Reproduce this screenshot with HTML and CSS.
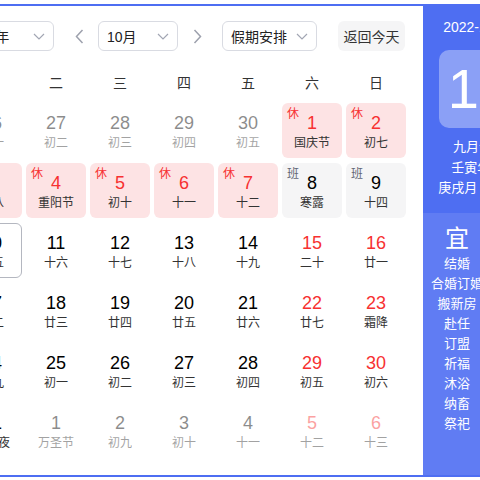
FILE: index.html
```html
<!DOCTYPE html>
<html lang="zh-CN">
<head>
<meta charset="utf-8">
<title>万年历</title>
<link rel="stylesheet" href="styles.css">
</head>
<body>
<div class="viewport">
  <div class="calendar">
    <div class="main">
      <div class="toolbar">
        <div class="select year"><span>2022年</span><svg width="12" height="7" viewBox="0 0 12 7"><path d="M1 1l5 5 5-5" fill="none" stroke="#a2a6b3" stroke-width="1.2"/></svg></div>
        <div class="nav prev"><svg width="9" height="15" viewBox="0 0 9 15"><path d="M7.5 1L1.5 7.5 7.5 14" fill="none" stroke="#9da1ad" stroke-width="1.5"/></svg></div>
        <div class="select month"><span>10月</span><svg width="12" height="7" viewBox="0 0 12 7"><path d="M1 1l5 5 5-5" fill="none" stroke="#a2a6b3" stroke-width="1.2"/></svg></div>
        <div class="nav next"><svg width="9" height="15" viewBox="0 0 9 15"><path d="M1.5 1L7.5 7.5 1.5 14" fill="none" stroke="#9da1ad" stroke-width="1.5"/></svg></div>
        <div class="select holiday"><span>假期安排</span><svg width="12" height="7" viewBox="0 0 12 7"><path d="M1 1l5 5 5-5" fill="none" stroke="#a2a6b3" stroke-width="1.2"/></svg></div>
        <div class="today-btn">返回今天</div>
      </div>
      <div class="weekdays">
        <span>一</span><span>二</span><span>三</span><span>四</span><span>五</span><span>六</span><span>日</span>
      </div>
      <div class="grid">
        <div class="cell other"><span class="num">26</span><span class="lunar">初一</span></div>
        <div class="cell other"><span class="num">27</span><span class="lunar">初二</span></div>
        <div class="cell other"><span class="num">28</span><span class="lunar">初三</span></div>
        <div class="cell other"><span class="num">29</span><span class="lunar">初四</span></div>
        <div class="cell other"><span class="num">30</span><span class="lunar">初五</span></div>
        <div class="cell rest"><span class="tag">休</span><span class="num">1</span><span class="lunar">国庆节</span></div>
        <div class="cell rest"><span class="tag">休</span><span class="num">2</span><span class="lunar">初七</span></div>

        <div class="cell rest"><span class="tag">休</span><span class="num">3</span><span class="lunar">初八</span></div>
        <div class="cell rest"><span class="tag">休</span><span class="num">4</span><span class="lunar">重阳节</span></div>
        <div class="cell rest"><span class="tag">休</span><span class="num">5</span><span class="lunar">初十</span></div>
        <div class="cell rest"><span class="tag">休</span><span class="num">6</span><span class="lunar">十一</span></div>
        <div class="cell rest"><span class="tag">休</span><span class="num">7</span><span class="lunar">十二</span></div>
        <div class="cell work"><span class="tag">班</span><span class="num">8</span><span class="lunar">寒露</span></div>
        <div class="cell work"><span class="tag">班</span><span class="num">9</span><span class="lunar">十四</span></div>

        <div class="cell today"><span class="num">10</span><span class="lunar">十五</span></div>
        <div class="cell"><span class="num">11</span><span class="lunar">十六</span></div>
        <div class="cell"><span class="num">12</span><span class="lunar">十七</span></div>
        <div class="cell"><span class="num">13</span><span class="lunar">十八</span></div>
        <div class="cell"><span class="num">14</span><span class="lunar">十九</span></div>
        <div class="cell weekend"><span class="num">15</span><span class="lunar">二十</span></div>
        <div class="cell weekend"><span class="num">16</span><span class="lunar">廿一</span></div>

        <div class="cell"><span class="num">17</span><span class="lunar">廿二</span></div>
        <div class="cell"><span class="num">18</span><span class="lunar">廿三</span></div>
        <div class="cell"><span class="num">19</span><span class="lunar">廿四</span></div>
        <div class="cell"><span class="num">20</span><span class="lunar">廿五</span></div>
        <div class="cell"><span class="num">21</span><span class="lunar">廿六</span></div>
        <div class="cell weekend"><span class="num">22</span><span class="lunar">廿七</span></div>
        <div class="cell weekend"><span class="num">23</span><span class="lunar">霜降</span></div>

        <div class="cell"><span class="num">24</span><span class="lunar">廿九</span></div>
        <div class="cell"><span class="num">25</span><span class="lunar">初一</span></div>
        <div class="cell"><span class="num">26</span><span class="lunar">初二</span></div>
        <div class="cell"><span class="num">27</span><span class="lunar">初三</span></div>
        <div class="cell"><span class="num">28</span><span class="lunar">初四</span></div>
        <div class="cell weekend"><span class="num">29</span><span class="lunar">初五</span></div>
        <div class="cell weekend"><span class="num">30</span><span class="lunar">初六</span></div>

        <div class="cell"><span class="num">31</span><span class="lunar">万圣夜</span></div>
        <div class="cell other"><span class="num">1</span><span class="lunar">万圣节</span></div>
        <div class="cell other"><span class="num">2</span><span class="lunar">初九</span></div>
        <div class="cell other"><span class="num">3</span><span class="lunar">初十</span></div>
        <div class="cell other"><span class="num">4</span><span class="lunar">十一</span></div>
        <div class="cell other weekend"><span class="num">5</span><span class="lunar">十二</span></div>
        <div class="cell other weekend"><span class="num">6</span><span class="lunar">十三</span></div>
      </div>
    </div>
    <div class="side">
      <div class="side-top">
        <div class="date">2022-10-10</div>
        <div class="tile">10</div>
        <div class="lunar-info">
          <div>九月十五</div>
          <div>壬寅年 虎</div>
          <div>庚戌月 丙午日</div>
        </div>
      </div>
      <div class="almanac">
        <div class="col">
          <div class="col-title">宜</div>
          <div>结婚</div>
          <div>合婚订婚</div>
          <div>搬新房</div>
          <div>赴任</div>
          <div>订盟</div>
          <div>祈福</div>
          <div>沐浴</div>
          <div>纳畜</div>
          <div>祭祀</div>
        </div>
        <div class="col">
          <div class="col-title">忌</div>
          <div>开市</div>
          <div>安葬</div>
          <div>破土</div>
          <div>动土</div>
        </div>
      </div>
    </div>
  </div>
</div>
</body>
</html>
```

FILE: styles.css
```css
* {
  box-sizing: border-box;
  margin: 0;
  padding: 0;
}

body {
  margin: 0;
  background: #fff;
  font-family: "Liberation Sans", "Noto Sans CJK SC", sans-serif;
  color: #333;
}

.viewport {
  width: 480px;
  height: 480px;
  overflow: hidden;
  padding-top: 4px;
}

.calendar {
  display: flex;
  width: 584px;
  margin-left: -45px;
  border-top: 2px solid #4e6ef2;
  border-bottom: 2px solid #4e6ef2;
}

.main {
  flex-shrink: 0;
  width: 468px;
  padding: 0 17px 17px 7px;
}

.toolbar {
  display: flex;
  align-items: center;
  height: 30px;
  margin: 15px 0 0 -7px;
}

.select {
  display: flex;
  align-items: center;
  justify-content: space-between;
  height: 30px;
  padding: 0 8px;
  border: 1px solid #d9dbe2;
  border-radius: 6px;
  font-size: 14px;
  color: #222;
}

.year { width: 99px; }
.month { width: 80px; }
.holiday { width: 95px; }

.nav {
  display: flex;
  justify-content: center;
  align-items: center;
  width: 24px;
  height: 30px;
}

.prev { margin: 0 7px 0 13px; }
.next { margin: 0 13px 0 7px; }

.today-btn {
  display: flex;
  align-items: center;
  justify-content: center;
  width: 67px;
  height: 30px;
  margin-left: 21px;
  border-radius: 6px;
  background: #f5f5f6;
  font-size: 14px;
  color: #333;
}

.weekdays {
  display: grid;
  grid-template-columns: repeat(7, 60px);
  column-gap: 4px;
  margin-top: 17px;
  height: 30px;
  line-height: 30px;
  text-align: center;
  font-size: 14px;
  color: #333;
}

.grid {
  display: grid;
  grid-template-columns: repeat(7, 60px);
  grid-auto-rows: 55px;
  column-gap: 4px;
  row-gap: 5px;
  margin-top: 5px;
}

.cell {
  position: relative;
  border-radius: 6px;
  padding-top: 10px;
  text-align: center;
}

.num {
  display: block;
  font-size: 18px;
  line-height: 20px;
  color: #000;
}

.lunar {
  display: block;
  margin-top: 2px;
  font-size: 12px;
  line-height: 16px;
  color: #333;
}

.tag {
  position: absolute;
  left: 5px;
  top: 4px;
  font-size: 12px;
  line-height: 14px;
}

.weekend .num { color: #f73131; }

.other { opacity: 0.45; }

.rest { background: #fde3e4; }
.rest .num, .rest .tag { color: #f73131; }

.work { background: #f5f5f6; }
.work .tag { color: #626675; }

.today { border: 1px solid #b4b7c0; padding-top: 9px; }

.side {
  flex-shrink: 0;
  display: flex;
  flex-direction: column;
  width: 116px;
  background: #4e6ef2;
  color: #fff;
}

.side-top {
  padding: 11px 4px 14px 0;
  text-align: center;
}

.date {
  font-size: 14px;
  line-height: 20px;
}

.tile {
  width: 80px;
  height: 78px;
  margin: 13px auto 0;
  border-radius: 10px;
  background: rgba(255, 255, 255, 0.35);
  font-size: 56px;
  line-height: 78px;
}

.lunar-info {
  margin-top: 9px;
  font-size: 13px;
  line-height: 20.5px;
}

.almanac {
  flex: 1;
  display: grid;
  grid-template-columns: 68px 1fr;
  padding-top: 11px;
  background: rgba(255, 255, 255, 0.1);
}

.col {
  text-align: center;
  font-size: 13px;
  line-height: 20px;
}

.col-title {
  font-size: 24px;
  line-height: 30px;
}
```
